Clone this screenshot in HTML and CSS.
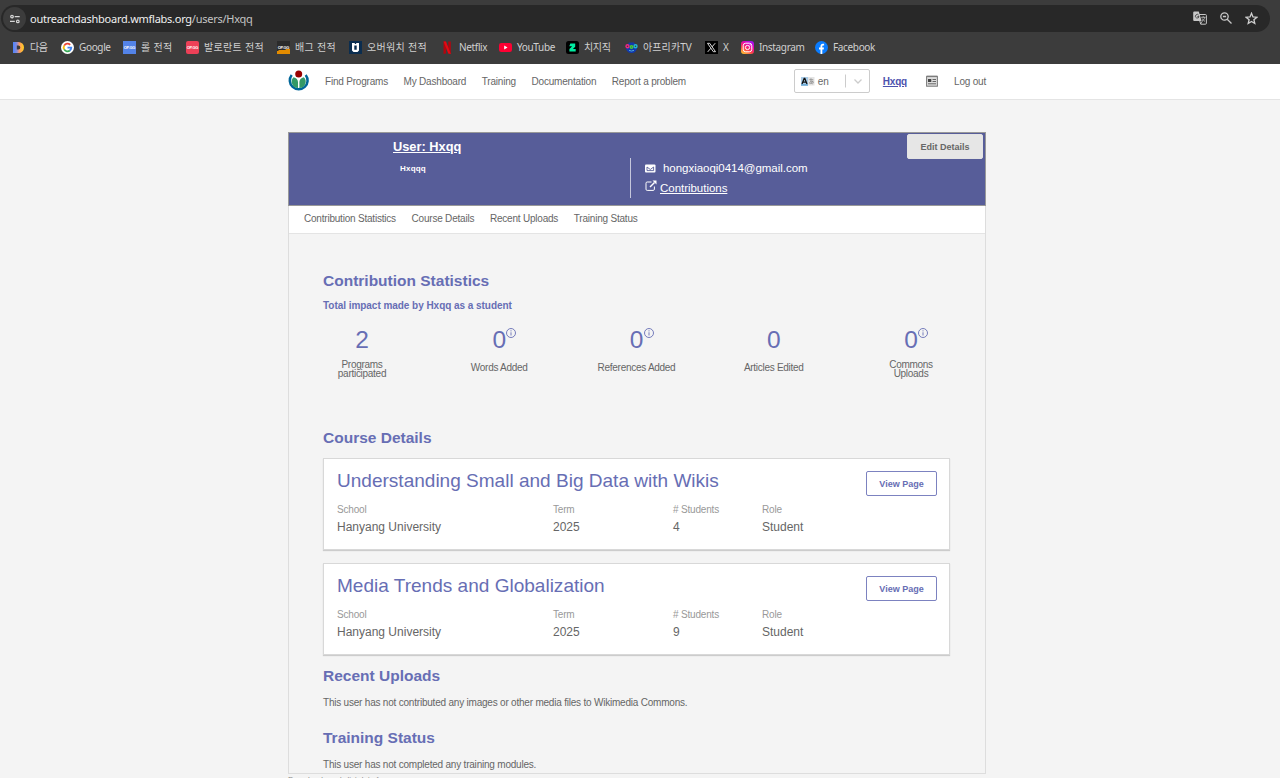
FILE: index.html
```
<!DOCTYPE html>
<html lang="en">

<head>
    <meta charset="UTF-8">
    <meta name="viewport" content="width=device-width, initial-scale=1.0">
    <title>User: Hxqq</title>
    <link rel="stylesheet" href="styles.css">
</head>

<body>

    <!-- Browser bar -->
    <div class="browser">
        <div class="address-bar">
            <span class="site-info">
                <svg width="12" height="12" viewBox="0 0 12 12" fill="none" stroke="#d6d6d6" stroke-width="1.2"><circle cx="3" cy="3.6" r="1.3"/><path d="M5.7 3.6h5M1 8.4h4.8"/><circle cx="8.8" cy="8.4" r="1.3"/></svg>
            </span>
            <span class="url">outreachdashboard.wmflabs.org<span class="path">/users/Hxqq</span></span>
            <div class="address-icons">
                <svg width="14" height="14" viewBox="0 0 14 14"><path d="M5 3.5h7.4a1 1 0 0 1 1 1v7.7a1 1 0 0 1-1 1H7.7L5 3.5z" fill="none" stroke="#c7c7c7"/><path d="M1.2.5h4.6l2.8 9.6H1.2a1 1 0 0 1-1-1V1.5a1 1 0 0 1 1-1z" fill="#c7c7c7"/><path d="M5.7 4.2A1.8 1.8 0 1 0 6 5.5H4.4" fill="none" stroke="#333" stroke-width=".8"/><path d="M8.2 6.3h4.3M10.2 5.2v1.1M11.7 6.3c-.3 1.8-1.4 3-2.7 3.9M9.2 7.5c.5 1.2 1.5 2.1 2.8 2.9M7.6 13l1.5-2.7" fill="none" stroke="#c7c7c7" stroke-width=".8"/></svg>
                <svg width="12" height="12" viewBox="0 0 12 12" fill="none" stroke="#c7c7c7" stroke-width="1.3"><circle cx="4.5" cy="4.5" r="3.7"/><path d="M7.2 7.2l4.3 4.3M2.9 4.5h3.2"/></svg>
                <svg width="13" height="13" viewBox="0 0 13 13" fill="none" stroke="#d0d0d0" stroke-width="1.3"><path d="M6.5 1.3l1.5 3.6 3.9.3-3 2.5.9 3.8-3.3-2-3.3 2 .9-3.8-3-2.5 3.9-.3z"/></svg>
            </div>
        </div>
        <div class="bookmarks">
            <div class="bookmark">
                <svg width="13" height="13" viewBox="0 0 13 13"><defs><linearGradient id="daum" x1="0" x2="1"><stop offset="0" stop-color="#4a86ff"/><stop offset=".35" stop-color="#8a8ad8"/><stop offset=".6" stop-color="#ff9a5a"/><stop offset="1" stop-color="#ffd21c"/></linearGradient></defs><path d="M1 1h5.5a5.5 5.5 0 0 1 0 11H1zM4.800 4.500v4h1.500a2 2 0 0 0 0-4z" fill="url(#daum)" fill-rule="evenodd"/></svg>
                다음
            </div>
            <div class="bookmark">
                <svg width="13" height="13" viewBox="0 0 13 13"><circle cx="6.5" cy="6.5" r="6.5" fill="#fff"/><g fill="none" stroke-width="1.8"><path d="M9.2 3.8A3.8 3.8 0 0 0 3.2 4.6" stroke="#ea4335"/><path d="M3.2 4.6a3.8 3.8 0 0 0 0 3.8" stroke="#fbbc05"/><path d="M3.2 8.4a3.8 3.8 0 0 0 5.7 1.1" stroke="#34a853"/><path d="M6.5 6.6h3.8a3.8 3.8 0 0 1-1.4 2.9" stroke="#4285f4"/></g></svg>
                Google
            </div>
            <div class="bookmark"><span class="opgg blue">OP.GG</span>롤 전적</div>
            <div class="bookmark"><span class="opgg red">OP.GG</span>발로란트 전적</div>
            <div class="bookmark"><span class="opgg dark">OP.GG</span>배그 전적</div>
            <div class="bookmark">
                <svg width="13" height="13" viewBox="0 0 13 13"><rect width="13" height="13" fill="#0b2d4f"/><path d="M3 2h7v7.500l-1.500 1.500h-4L3 9.500zM5.300 4.500v4.300h2.400V4.500z" fill="#fff" fill-rule="evenodd"/><path d="M5.800 2h1.400v1H5.800z" fill="#0b2d4f"/></svg>
                오버워치 전적
            </div>
            <div class="bookmark">
                <svg width="13" height="13" viewBox="0 0 13 13"><path d="M2.5.5H5v12L2.500 13zM7.300.5h2.500V13l-2.500-.5z" fill="#b1060f"/><path d="M2.500.5H5L9.800 13l-2.500-.4z" fill="#e50914"/></svg>
                Netflix
            </div>
            <div class="bookmark">
                <svg width="13" height="13" viewBox="0 0 13 13"><rect y="2" width="13" height="9" rx="2.3" fill="#ff0033"/><path d="M5.2 4.6v3.8l3.300-1.900z" fill="#fff"/></svg>
                YouTube
            </div>
            <div class="bookmark">
                <svg width="13" height="13" viewBox="0 0 13 13"><rect width="13" height="13" rx="2.5" fill="#000"/><path d="M4.300 2.400h4.900v3.300L6.900 7.900h2.800v2.600H3.400V8l2.700-2.700H3.300z" fill="#00eba0"/></svg>
                치지직
            </div>
            <div class="bookmark">
                <svg width="13" height="13" viewBox="0 0 13 13"><path d="M1 6h11c0 4-2.400 6-5.500 6S1 10 1 6zM4 1.500h5l2 3H2z" fill="#1239ad"/><g fill="none" stroke-width="1.4"><circle cx="2.5" cy="5.3" r="1.5" stroke="#f12682"/><circle cx="10.5" cy="5.3" r="1.5" stroke="#20b9d5"/><circle cx="6.5" cy="6" r="1.2" stroke="#46cb38"/><path d="M4 9.300q2.500 1.500 5 0" stroke="#4cacdb" stroke-width="1"/></g></svg>
                아프리카TV
            </div>
            <div class="bookmark">
                <svg width="13" height="13" viewBox="0 0 13 13"><rect width="13" height="13" fill="#000"/><path d="M2.5 2.300h2.200l5.800 8.400H8.300zM10.200 2.200L7 5.900M5.900 7.200L2.700 10.900" fill="none" stroke="#eee" stroke-width=".9"/></svg>
                X
            </div>
            <div class="bookmark">
                <svg width="13" height="13" viewBox="0 0 13 13"><defs><linearGradient id="insta" x1=".1" y1="1" x2=".7" y2="0"><stop offset="0" stop-color="#ffcf2e"/><stop offset=".4" stop-color="#fd3f4b"/><stop offset=".75" stop-color="#e302b5"/><stop offset="1" stop-color="#a413ee"/></linearGradient></defs><rect width="13" height="13" rx="3" fill="url(#insta)"/><g fill="none" stroke="#fff" stroke-width="1"><rect x="2.2" y="2.2" width="8.6" height="8.6" rx="2.5"/><circle cx="6.5" cy="6.5" r="2.1"/></g><circle cx="9.1" cy="3.9" r=".6" fill="#fff"/></svg>
                Instagram
            </div>
            <div class="bookmark">
                <svg width="13" height="13" viewBox="0 0 13 13"><circle cx="6.5" cy="6.5" r="6.5" fill="#0a7cff"/><path d="M5.500 13V8.400H4V6.500h1.500V5.300c0-1.800.9-2.600 2.400-2.600.5 0 .9 0 1.200.1v1.700h-.8c-.8 0-1 .4-1 1v1H9l-.3 1.900H7.300V13z" fill="#fff"/></svg>
                Facebook
            </div>
        </div>
    </div>

    <!-- Top navigation -->
    <nav class="top-nav">
        <svg class="logo" width="22" height="22" viewBox="0 0 22 22"><path d="M3.700 4.900a8.900 8.900 0 1 0 14 0" fill="none" stroke="#006699" stroke-width="2.5"/><path d="M5.600 7.200c2.800.8 4.400 2.400 4.400 4.800v6a6.300 6.300 0 0 1-4.400-10.800zM15.800 7.200c-2.800.8-4.400 2.400-4.400 4.800v6a6.300 6.300 0 0 0 4.400-10.800z" fill="#339966"/><circle cx="10.7" cy="4" r="3.5" fill="#990000"/></svg>
        <div class="nav-links">
            <a>Find Programs</a>
            <a>My Dashboard</a>
            <a>Training</a>
            <a>Documentation</a>
            <a>Report a problem</a>
        </div>
        <div class="nav-right">
            <div class="language">
                <svg width="14" height="9" viewBox="0 0 14 9"><rect y="0" width="7" height="8.5" fill="#a9cce8"/><rect x="7" width="6.5" height="8.5" fill="#e4e4e4"/><path d="M1 7L3.200 1.500h.6L6 7M2 5.200h3" fill="none" stroke="#111" stroke-width="1.3"/><path d="M0 8h7" stroke="#3b8cc4"/><path d="M8.300 2.600h4M10 1.200c-.3 2 0 4 .6 5.600M12 3.800c-.6 2-2 3-3.200 2.800-.8-.7.600-2.600 2.200-2.500 1.800.1 1.800 2.200.2 2.900" fill="none" stroke="#888" stroke-width=".7"/></svg>
                <span>en</span>
                <svg class="chevron" width="20" height="14" viewBox="0 0 20 14" fill="none" stroke="#ccc"><path d="M.5.5v13"/><path d="M9.500 5.500l3.500 3.500 3.500-3.500" stroke-width="1.3"/></svg>
            </div>
            <a class="user-link">Hxqq</a>
            <svg class="news" width="12" height="12" viewBox="0 0 12 12"><path d="M.5.5h11v2H.5z" fill="#999"/><rect x=".6" y="1.6" width="10.8" height="9.6" fill="#ddd" stroke="#777"/><rect x="2" y="4" width="3.3" height="3" fill="#444"/><path d="M6.500 4.500H10M6.500 6.500H10M2 8.800h8" stroke="#666"/></svg>
            <a>Log out</a>
        </div>
    </nav>

    <main class="profile">
        <header class="banner">
            <div class="identity">
                <h1>User: Hxqq</h1>
                <p>Hxqqq</p>
            </div>
            <div class="contact">
                <div class="contact-row">
                    <svg width="11" height="9" viewBox="0 0 11 9"><rect x="0" y=".5" width="10.5" height="8" rx="1" fill="#fff"/><path d="M2 3l3.300 2.500L8.600 3v3.600H2z" fill="none" stroke="#575d99" stroke-width=".9"/></svg>
                    <span class="email">hongxiaoqi0414@gmail.com</span>
                </div>
                <div class="contact-row">
                    <svg class="external" width="12" height="12" viewBox="0 0 12 12" fill="none" stroke="#fff"><path d="M6.500 2H2.200A1.200 1.200 0 0 0 1 3.200v6a1.200 1.200 0 0 0 1.200 1.200h6A1.200 1.200 0 0 0 9.400 9.200V6.500"/><path d="M5 7l4.500-4.500" stroke-width="1.5"/><path d="M7.500.5h4v4z" fill="#fff" stroke="none"/></svg>
                    <a>Contributions</a>
                </div>
            </div>
            <button class="edit">Edit Details</button>
        </header>

        <nav class="sub-nav">
            <a>Contribution Statistics</a>
            <a>Course Details</a>
            <a>Recent Uploads</a>
            <a>Training Status</a>
        </nav>

        <section class="statistics">
            <h2>Contribution Statistics</h2>
            <h3>Total impact made by Hxqq as a student</h3>
            <div class="stats">
                <div class="stat">
                    <div class="number">2</div>
                    <p>Programs participated</p>
                </div>
                <div class="stat">
                    <div class="number">0<svg class="info" viewBox="0 0 10 10"><circle cx="5" cy="5" r="4.5"/><path d="M5 2.3v1.1M5 4.3v3.2"/></svg></div>
                    <p>Words Added</p>
                </div>
                <div class="stat">
                    <div class="number">0<svg class="info" viewBox="0 0 10 10"><circle cx="5" cy="5" r="4.5"/><path d="M5 2.3v1.1M5 4.3v3.2"/></svg></div>
                    <p>References Added</p>
                </div>
                <div class="stat">
                    <div class="number">0</div>
                    <p>Articles Edited</p>
                </div>
                <div class="stat">
                    <div class="number">0<svg class="info" viewBox="0 0 10 10"><circle cx="5" cy="5" r="4.5"/><path d="M5 2.3v1.1M5 4.3v3.2"/></svg></div>
                    <p>Commons<br>Uploads</p>
                </div>
            </div>
        </section>

        <section class="courses">
            <h2>Course Details</h2>
            <article class="course">
                <div class="course-head">
                    <h4>Understanding Small and Big Data with Wikis</h4>
                    <button class="view">View Page</button>
                </div>
                <dl>
                    <div><dt>School</dt><dd>Hanyang University</dd></div>
                    <div><dt>Term</dt><dd>2025</dd></div>
                    <div><dt># Students</dt><dd>4</dd></div>
                    <div><dt>Role</dt><dd>Student</dd></div>
                </dl>
            </article>
            <article class="course">
                <div class="course-head">
                    <h4>Media Trends and Globalization</h4>
                    <button class="view">View Page</button>
                </div>
                <dl>
                    <div><dt>School</dt><dd>Hanyang University</dd></div>
                    <div><dt>Term</dt><dd>2025</dd></div>
                    <div><dt># Students</dt><dd>9</dd></div>
                    <div><dt>Role</dt><dd>Student</dd></div>
                </dl>
            </article>
        </section>

        <section class="uploads">
            <h2>Recent Uploads</h2>
            <p>This user has not contributed any images or other media files to Wikimedia Commons.</p>
        </section>

        <section class="training">
            <h2>Training Status</h2>
            <p>This user has not completed any training modules.</p>
        </section>
    </main>

    <footer>Download user's list data for</footer>

</body>

</html>
```
FILE: styles.css
```
* {
    box-sizing: border-box;
}

body {
    margin: 0;
    height: 778px;
    overflow: hidden;
    background-color: #f4f4f4;
    color: #666;
    font-family: "Liberation Sans", Arial, sans-serif;
    font-size: 10px;
}

h1, h2, h3, h4, p, dl, dd {
    margin: 0;
}

svg {
    display: block;
    flex: none;
}

/* Browser bar */
.browser {
    height: 64px;
    padding-top: 5px;
    background-color: #3c3c3c;
    color: #d0d0d0;
    font-family: "Noto Sans", "Noto Sans CJK KR", sans-serif;
}

.address-bar {
    display: flex;
    align-items: center;
    height: 27px;
    margin: 0 10px 0 1px;
    padding: 0 12px 0 2px;
    border-radius: 14px;
    background-color: #282828;
}

.site-info {
    display: flex;
    align-items: center;
    justify-content: center;
    width: 23px;
    height: 23px;
    border-radius: 50%;
    background-color: #3c3c3c;
}

.url {
    margin: -1px 0 0 4px;
    color: #f0f0f0;
    font-size: 11px;
    letter-spacing: -0.26px;
}

.path {
    color: #c4c4c4;
}

.address-icons {
    display: flex;
    align-items: center;
    gap: 13px;
    margin: -1px 0 0 auto;
}

.bookmarks {
    display: grid;
    grid-template-columns: 49px 62px 63px 91px 72px 92px 58px 67px 59px 80px 36px 74px auto;
    align-items: center;
    height: 31px;
    padding-left: 12px;
}

.bookmark {
    display: flex;
    align-items: center;
    gap: 5px;
    height: 16px;
    padding-bottom: 1px;
    font-size: 10px;
    line-height: 14px;
    letter-spacing: -0.35px;
    white-space: nowrap;
}

.bookmark:nth-child(3),
.bookmark:nth-child(4),
.bookmark:nth-child(5),
.bookmark:nth-child(6) {
    letter-spacing: 0.3px;
}

.bookmark:nth-child(10) {
    letter-spacing: 0.1px;
}

.opgg {
    width: 13px;
    height: 13px;
    color: #fff;
    font: bold 4px/13px "Liberation Sans", sans-serif;
    letter-spacing: -0.2px;
    text-align: center;
}

.blue {
    background-color: #5383e8;
}

.red {
    border-radius: 2px;
    background-color: #ec4057;
}

.dark {
    background: linear-gradient(172deg, #2b2b2b 65%, #e28b00 66%);
}

/* Top navigation */
.top-nav {
    display: flex;
    align-items: center;
    height: 36px;
    padding: 0 294px 1px 288px;
    border-bottom: 1px solid #e4e4e4;
    background-color: #fff;
    font-size: 10px;
    letter-spacing: -0.2px;
}

.nav-links {
    display: flex;
    gap: 15.6px;
    margin-left: 15px;
}

.nav-right {
    display: flex;
    align-items: center;
    margin-left: auto;
}

.language {
    display: flex;
    align-items: center;
    gap: 3px;
    width: 76px;
    height: 24px;
    padding: 0 4px 0 6px;
    border: 1px solid #ccc;
    border-radius: 2px;
}

.chevron {
    margin-left: auto;
}

.user-link {
    margin: 0 19px 0 13px;
    color: #4d52ae;
    font-weight: bold;
    text-decoration: underline;
}

.news {
    margin-right: 16px;
}

/* Profile */
.profile {
    width: 698px;
    height: 642px;
    margin: 32px 0 0 288px;
    border: 1px solid #ddd;
    border-top: 0;
}

.banner {
    display: flex;
    height: 74px;
    margin: 0 -1px;
    border: 1px solid #999;
    background-color: #575d99;
    color: #fff;
}

.identity {
    width: 341px;
    padding: 6px 0 0 104px;
}

.identity h1 {
    font-size: 12.8px;
    line-height: 15px;
    text-decoration: underline;
}

.identity p {
    margin: 10px 0 0 7px;
    font-size: 8px;
    font-weight: bold;
    line-height: 10px;
    letter-spacing: 0.2px;
}

.contact {
    height: 40px;
    margin-top: 25px;
    padding-left: 14px;
    border-left: 1px solid #c5c7dc;
    font-size: 11.5px;
    letter-spacing: -0.03px;
}

.contact-row {
    display: flex;
    align-items: center;
    height: 20px;
}

.contact a {
    margin-left: 3px;
    text-decoration: underline;
}

.email {
    margin-left: 7px;
}

.external {
    margin-bottom: 5px;
}

button {
    padding: 0;
    font-family: inherit;
    font-size: 9px;
    font-weight: bold;
}

.edit {
    width: 76px;
    height: 25px;
    margin: 1px 2px 0 auto;
    border: 1px solid #e4e4e4;
    border-radius: 2px;
    background-color: #e6e6e6;
    color: #676767;
}

.sub-nav {
    display: flex;
    gap: 15.7px;
    height: 28px;
    padding: 7px 0 0 15px;
    border-bottom: 1px solid #e4e4e4;
    background-color: #fff;
    line-height: 12px;
    letter-spacing: -0.21px;
}

section {
    padding: 0 35px 0 34px;
}

h2 {
    color: #676eb4;
    font-size: 15.5px;
    line-height: 18px;
}

.statistics {
    height: 195px;
    padding-top: 38px;
}

h3 {
    margin-top: 10px;
    color: #676eb4;
    font-size: 10px;
    line-height: 12px;
    letter-spacing: -0.04px;
}

.stats {
    display: flex;
    justify-content: space-between;
    margin-top: 13px;
}

.stat {
    display: flex;
    flex-direction: column;
    align-items: center;
    width: 78px;
    text-align: center;
}

.number {
    position: relative;
    color: #676eb4;
    font-size: 24.5px;
    line-height: 30px;
}

/* Sits over the corner of the number */
.info {
    position: absolute;
    top: 3px;
    left: 14px;
    width: 10px;
    height: 10px;
    fill: none;
    stroke: #676eb4;
    stroke-width: 0.9;
}

.stat p {
    display: flex;
    align-items: center;
    height: 20px;
    margin-top: 4px;
    line-height: 9.5px;
    letter-spacing: -0.28px;
}

.stat:nth-child(2) p,
.stat:nth-child(3) p,
.stat:nth-child(4) p {
    height: 18px;
}

.course {
    height: 92px;
    margin-top: 11px;
    padding: 12px 12px 0 13px;
    border: 1px solid #d8d8d8;
    background-color: #fff;
    box-shadow: 0 1px 1px #ccc;
}

.course + .course {
    margin-top: 13px;
}

.course-head {
    display: flex;
    justify-content: space-between;
    height: 33px;
}

h4 {
    color: #676eb4;
    font-size: 19.05px;
    font-weight: normal;
    line-height: 19px;
}

.view {
    width: 71px;
    height: 25px;
    border: 1px solid #7c82c0;
    border-radius: 2px;
    background-color: #fff;
    color: #676eb4;
}

dl {
    display: grid;
    grid-template-columns: 216px 120px 89px auto;
}

dt {
    color: #999;
    line-height: 12px;
    letter-spacing: -0.18px;
}

dd {
    margin-top: 4px;
    font-size: 12px;
    line-height: 15px;
}

.uploads {
    padding-top: 12px;
}

.uploads p, .training p {
    margin-top: 12px;
    line-height: 12px;
    letter-spacing: -0.21px;
}

.training {
    padding-top: 20px;
}

footer {
    padding: 2px 0 0 288px;
    color: #888;
    font-size: 8px;
    line-height: 8px;
    letter-spacing: -0.1px;
}
```
